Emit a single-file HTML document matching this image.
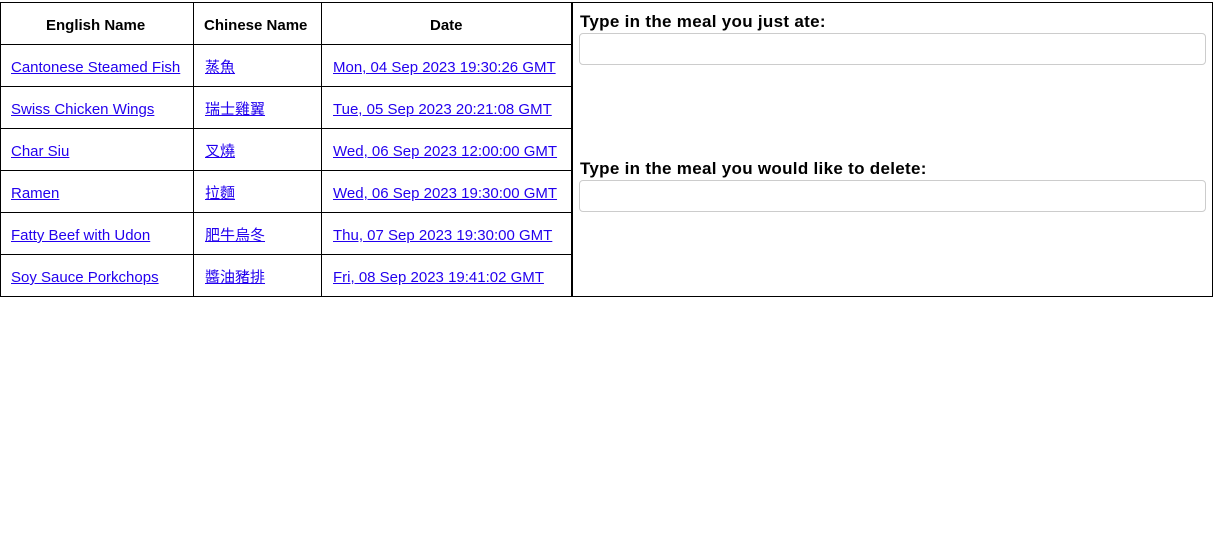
<!DOCTYPE html>
<html><head><meta charset="utf-8"><style>
body{margin:0;background:#fff;font-family:"Liberation Sans","Noto Sans CJK TC",sans-serif;width:1214px;height:549px;overflow:hidden;position:relative}
.v{position:absolute;background:#000;width:1px}
.h{position:absolute;background:#000;height:1px}
.t{position:absolute;font-size:15px;white-space:nowrap;line-height:18px;margin-top:1px}
.b{font-weight:bold;color:#000}
a{color:#2200ee;text-decoration:underline}
.lab{position:absolute;left:580px;font-weight:bold;font-size:17px;line-height:20px;letter-spacing:0.3px}
.inp{position:absolute;left:579px;width:625px;height:30px;border:1px solid #ccc;border-radius:4px}
</style></head><body>
<div class="h" style="left:0;top:2px;width:1213px"></div>
<div class="h" style="left:0;top:44px;width:572px"></div>
<div class="h" style="left:0;top:86px;width:572px"></div>
<div class="h" style="left:0;top:128px;width:572px"></div>
<div class="h" style="left:0;top:170px;width:572px"></div>
<div class="h" style="left:0;top:212px;width:572px"></div>
<div class="h" style="left:0;top:254px;width:572px"></div>
<div class="h" style="left:0;top:296px;width:1213px"></div>
<div class="v" style="left:0;top:2px;height:295px"></div>
<div class="v" style="left:193px;top:2px;height:295px"></div>
<div class="v" style="left:321px;top:2px;height:295px"></div>
<div class="v" style="left:571px;top:2px;height:295px;width:2px"></div>
<div class="v" style="left:1212px;top:2px;height:295px"></div>

<div class="t b" style="left:46px;top:16px">English Name</div>
<div class="t b" style="left:204px;top:16px">Chinese Name</div>
<div class="t b" style="left:430px;top:16px">Date</div>

<div class="t" style="left:11px;top:58px"><a>Cantonese Steamed Fish</a></div>
<div class="t" style="left:205px;top:58px"><a>蒸魚</a></div>
<div class="t" style="left:333px;top:58px"><a>Mon, 04 Sep 2023 19:30:26 GMT</a></div>

<div class="t" style="left:11px;top:100px"><a>Swiss Chicken Wings</a></div>
<div class="t" style="left:205px;top:100px"><a>瑞士雞翼</a></div>
<div class="t" style="left:333px;top:100px"><a>Tue, 05 Sep 2023 20:21:08 GMT</a></div>

<div class="t" style="left:11px;top:142px"><a>Char Siu</a></div>
<div class="t" style="left:205px;top:142px"><a>叉燒</a></div>
<div class="t" style="left:333px;top:142px"><a>Wed, 06 Sep 2023 12:00:00 GMT</a></div>

<div class="t" style="left:11px;top:184px"><a>Ramen</a></div>
<div class="t" style="left:205px;top:184px"><a>拉麵</a></div>
<div class="t" style="left:333px;top:184px"><a>Wed, 06 Sep 2023 19:30:00 GMT</a></div>

<div class="t" style="left:11px;top:226px"><a>Fatty Beef with Udon</a></div>
<div class="t" style="left:205px;top:226px"><a>肥牛烏冬</a></div>
<div class="t" style="left:333px;top:226px"><a>Thu, 07 Sep 2023 19:30:00 GMT</a></div>

<div class="t" style="left:11px;top:268px"><a>Soy Sauce Porkchops</a></div>
<div class="t" style="left:205px;top:268px"><a>醬油豬排</a></div>
<div class="t" style="left:333px;top:268px"><a>Fri, 08 Sep 2023 19:41:02 GMT</a></div>

<div class="lab" style="top:12px">Type in the meal you just ate:</div>
<div class="inp" style="top:33px"></div>
<div class="lab" style="top:159px">Type in the meal you would like to delete:</div>
<div class="inp" style="top:180px"></div>
</body></html>
